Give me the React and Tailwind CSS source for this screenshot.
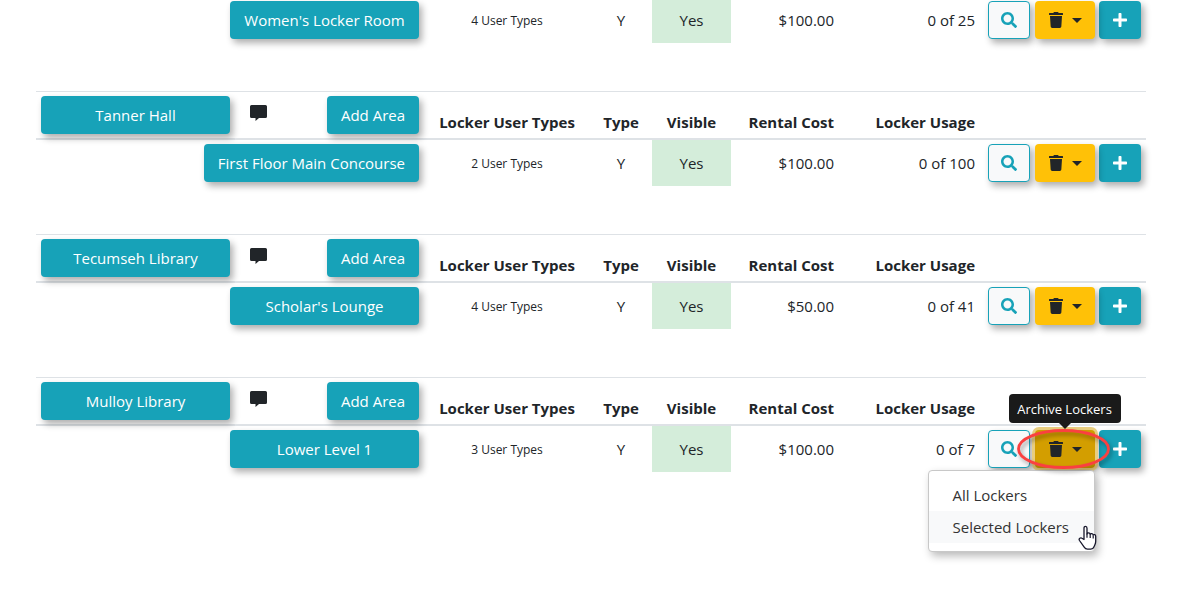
import { FaPlus, FaSearch, FaTrash } from "react-icons/fa";

const buildings = [
  { name: null, area: "Women's Locker Room", types: "4 User Types", cost: "$100.00", usage: "0 of 25" },
  { name: "Tanner Hall", area: "First Floor Main Concourse", types: "2 User Types", cost: "$100.00", usage: "0 of 100" },
  { name: "Tecumseh Library", area: "Scholar's Lounge", types: "4 User Types", cost: "$50.00", usage: "0 of 41" },
  { name: "Mulloy Library", area: "Lower Level 1", types: "3 User Types", cost: "$100.00", usage: "0 of 7", open: true },
];

const shadow = "shadow-[3px_4px_7px_rgba(0,0,0,0.32)]";
const teal = `h-[38px] rounded bg-[#17a2b8] text-white ${shadow}`;
const heading = "px-[5px] pb-1 align-bottom font-bold border-t border-t-[#dee2e6] border-b-2 border-b-[#dee2e6] whitespace-nowrap";
const cell = "px-[5px] align-middle";

function CommentIcon() {
  return (
    <svg width="17" height="16" viewBox="0 0 17 16" fill="currentColor" aria-hidden="true">
      <path d="M1.500 0h14A1.500 1.500 0 0 1 17 1.500v10a1.500 1.500 0 0 1-1.500 1.500H9L5.500 16V13h-4A1.500 1.500 0 0 1 0 11.500v-10A1.500 1.500 0 0 1 1.500 0z" />
    </svg>
  );
}

function PointerCursor() {
  return (
    <svg className="absolute -right-[3px] top-[54px] pointer-events-none" width="19" height="25" viewBox="0 0 19 25" aria-hidden="true">
      <path
        d="M6 14.5V3.2C6 .7 9 .7 9 3.2V9c.2-1.5 3-1.6 3.2.4.5-1.300 2.900-1.100 3 .8.5-1 2.500-.8 2.500 1v5.300c0 2.500-1.100 3.500-1.700 5.300-.5 1.500-1.700 2.300-3.200 2.300H9.500c-1.500 0-2.500-.6-3.300-1.900L1.500 15.500c-1.200-2 1.200-3.300 2.500-2.200z"
        fill="#fff"
        stroke="#17172b"
        strokeWidth="1.3"
        strokeLinejoin="round"
      />
      <path d="M9 8.500v4.300M12.200 9.500v3.500M15.200 10.500v3" stroke="#17172b" strokeWidth="1.200" fill="none" />
    </svg>
  );
}

function ArchiveMenu({ open }) {
  return (
    <div className="relative">
      <button
        type="button"
        aria-label="Archive Lockers"
        aria-expanded={!!open}
        className={
          open
            ? "flex h-[38px] w-[60px] items-center justify-center gap-2 rounded bg-[#d39e00] shadow-[0_0_0_3px_#e8cd7f,3px_4px_7px_rgba(0,0,0,0.32)]"
            : `flex h-[38px] w-[60px] items-center justify-center gap-2 rounded bg-[#ffc107] ${shadow}`
        }
      >
        <FaTrash size={16} />
        <svg width="10" height="5" viewBox="0 0 10 5" aria-hidden="true">
          <path d="M0 0h10L5 5z" fill="currentColor" />
        </svg>
      </button>
      {open && (
        <>
          <div role="tooltip" className="absolute bottom-[45px] left-1/2 z-20 flex h-[29px] w-28 -translate-x-1/2 items-center justify-center whitespace-nowrap rounded bg-[#1a1a1a] text-[13px] font-medium text-white">
            Archive Lockers
            <svg className="absolute left-1/2 top-full -translate-x-1/2" width="12" height="6" viewBox="0 0 12 6" aria-hidden="true">
              <path d="M0 0h12L6 6z" fill="#1a1a1a" />
            </svg>
          </div>
          <div className="absolute right-0 top-10 z-10 w-[167px] rounded border border-[#c8c8c8] bg-white py-2 shadow-[3px_4px_8px_rgba(0,0,0,0.28)]">
            <button type="button" className="block h-8 w-full whitespace-nowrap pl-6 text-left text-[15px] text-[#333]">All Lockers</button>
            <button type="button" className="block h-8 w-full whitespace-nowrap bg-[#f8f9fa] pl-6 text-left text-[15px] text-[#333]">Selected Lockers</button>
            <PointerCursor />
          </div>
          <svg className="pointer-events-none absolute -left-5 -top-[5px] z-20 drop-shadow-[2px_3px_2px_rgba(0,0,0,0.35)]" width="96" height="48" viewBox="0 0 96 48" aria-hidden="true">
            <ellipse cx="48.500" cy="24" rx="45" ry="18.500" fill="none" stroke="#fa4040" strokeWidth="2.800" />
          </svg>
        </>
      )}
    </div>
  );
}

function Building({ name, area, types, cost, usage, open }) {
  return (
    <table className="w-full table-fixed border-separate border-spacing-0">
      <colgroup>
        <col className="w-[199px]" />
        <col className="w-[189px]" />
        <col className="w-[166px]" />
        <col className="w-[62px]" />
        <col className="w-[79px]" />
        <col className="w-[108px]" />
        <col className="w-[141px]" />
        <col className="w-[166px]" />
      </colgroup>
      {name && (
        <thead>
          <tr className="h-[49px]">
            <th className={heading}>
              <button type="button" className={`${teal} block w-full font-normal`}>{name}</button>
            </th>
            <th className={heading}>
              <div className="flex items-start justify-between pl-[10px]">
                <button type="button" aria-label="Comments" className="pt-[9px]">
                  <CommentIcon />
                </button>
                <button type="button" className={`${teal} w-[92px] font-normal`}>Add Area</button>
              </div>
            </th>
            <th className={`${heading} text-center`}>Locker User Types</th>
            <th className={`${heading} text-center`}>Type</th>
            <th className={`${heading} text-center`}>Visible</th>
            <th className={`${heading} text-right`}>Rental Cost</th>
            <th className={`${heading} text-right`}>Locker Usage</th>
            <th className={heading} aria-label="Actions" />
          </tr>
        </thead>
      )}
      <tbody>
        <tr className="h-[46px]">
          <td colSpan={2} className={`${cell} text-right`}>
            <button type="button" className={`${teal} min-w-[189px] whitespace-nowrap px-[14px] align-middle`}>{area}</button>
          </td>
          <td className={`${cell} pt-[2px] text-center text-[12px]`}>{types}</td>
          <td className={`${cell} text-center`}>Y</td>
          <td className={`${cell} bg-[#d4edda] text-center`}>Yes</td>
          <td className={`${cell} text-right`}>{cost}</td>
          <td className={`${cell} text-right`}>{usage}</td>
          <td className="pl-2 pr-[5px] align-middle">
            <div className="flex justify-between">
              <button type="button" aria-label="View lockers" className={`flex h-[38px] w-[42px] items-center justify-center rounded border border-[#17a2b8] bg-[#f8f9fa] text-[#17a2b8] ${shadow}`}>
                <FaSearch size={16} />
              </button>
              <ArchiveMenu open={open} />
              <button type="button" aria-label="Add lockers" className={`${teal} flex w-[42px] items-center justify-center`}>
                <FaPlus size={16} />
              </button>
            </div>
          </td>
        </tr>
      </tbody>
    </table>
  );
}

export default function App() {
  return (
    <div className="min-h-screen overflow-x-hidden bg-white pl-9 pr-[54px] font-['Open_Sans','Noto_Sans',sans-serif] text-[15px] leading-6 text-[#212529]">
      <main className="-mt-[3px] flex flex-col gap-12 pb-24">
        {buildings.map((b) => (
          <Building key={b.area} {...b} />
        ))}
      </main>
    </div>
  );
}
